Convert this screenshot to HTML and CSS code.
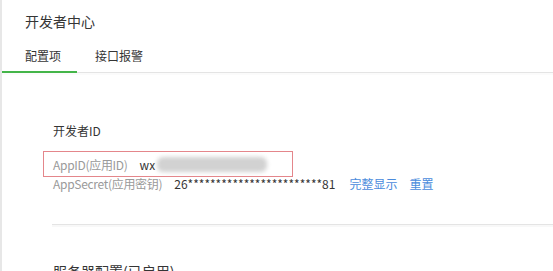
FILE: index.html
```html
<!DOCTYPE html>
<html>
<head>
  <meta charset="utf-8">
  <title>开发者中心</title>
  <link rel="stylesheet" href="styles.css">
</head>
<body>
  <div class="page">
    <h1 class="page-title">开发者中心</h1>

    <!-- Tabs -->
    <div class="tabs">
      <a class="tab active">配置项</a>
      <a class="tab">接口报警</a>
    </div>

    <div class="content">
      <div class="section">
        <h2 class="section-title">开发者ID</h2>
        <div class="rows">
          <div class="row highlight">
            <span class="label">AppID(应用ID)</span>
            <span class="value">wx<span class="blurred"></span></span>
          </div>
          <div class="row">
            <span class="label">AppSecret(应用密钥)</span>
            <span class="value">26************************81</span>
            <a class="link">完整显示</a>
            <a class="link">重置</a>
          </div>
        </div>
      </div>

      <div class="section next">
        <h2 class="section-title big">服务器配置(已启用)</h2>
      </div>
    </div>
  </div>
</body>
</html>
```

FILE: styles.css
```css
  body {
    margin: 0;
    background: #fff;
    font-family: "Noto Sans CJK SC", sans-serif;
    color: #353535;
  }

  .page {
    border-left: 2px solid #e7e7e7;
    min-height: 271px;
  }

  /* Title */
  .page-title {
    margin: 0;
    padding: 11px 0 0 23px;
    font-size: 14px;
    line-height: 20px;
    font-weight: normal;
  }

  /* Tabs */
  .tabs {
    display: flex;
    margin-top: 15px;
    border-bottom: 1px solid #e4e4e4;
  }

  .tab {
    display: block;
    font-size: 12px;
    line-height: 20px;
    padding-bottom: 5px;
    border-bottom: 2px solid transparent;
    margin-bottom: -1px;
    cursor: pointer;
  }

  .tab.active {
    width: 52px;
    padding-left: 23px;
    border-bottom-color: #44b549;
  }

  .tab + .tab {
    margin-left: 18px;
  }

  /* Content */
  .content {
    padding-left: 50px;
    border-top: 2px solid #fbfbfb;
  }

  .section {
    padding: 47px 0 0 1px;
  }

  .section-title {
    margin: 0;
    font-size: 12px;
    line-height: 18px;
    font-weight: normal;
  }

  .rows {
    margin-top: 15px;
  }

  .row {
    position: relative;
    display: flex;
    font-size: 12px;
    line-height: 19px;
  }

  .row.highlight::before {
    content: "";
    position: absolute;
    left: -10px;
    top: -4px;
    width: 248px;
    height: 24px;
    border: 1px solid #e4868b;
  }

  .label {
    color: #9a9a9a;
    margin-right: 12px;
    letter-spacing: -0.3px;
  }

  .value {
    display: flex;
    align-items: center;
  }

  .blurred {
    display: inline-block;
    width: 110px;
    height: 15px;
    margin-left: 2px;
    background: #d2d2d2;
    border-radius: 6px;
    filter: blur(2px);
  }

  .link {
    color: #4a8bdc;
    margin-left: 14px;
    cursor: pointer;
  }

  .link + .link {
    margin-left: 12px;
  }

  .section.next {
    margin-top: 31px;
    padding-top: 36px;
    border-top: 1px solid #e4e4e4;
    box-shadow: 0 2px 0 #f8f8f8 inset;
  }

  .section-title.big {
    font-size: 14px;
    line-height: 20px;
  }
```
